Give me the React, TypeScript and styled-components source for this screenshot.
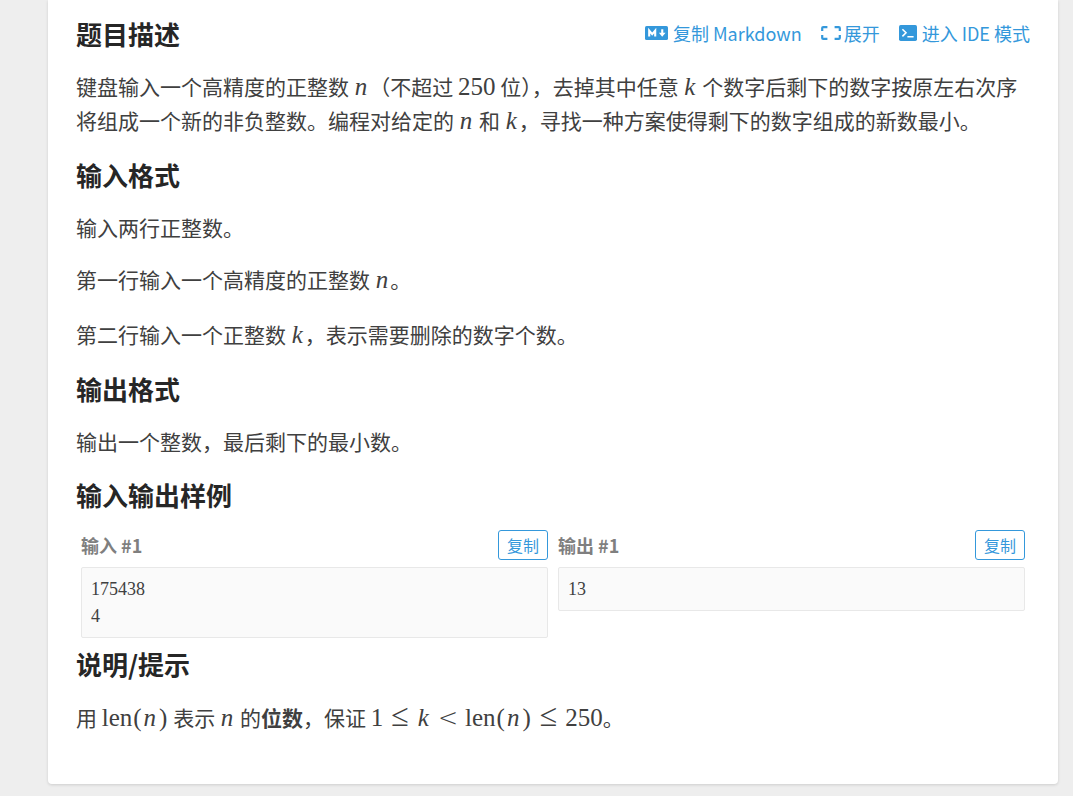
import React from "react";
import styled, { createGlobalStyle } from "styled-components";

const GlobalStyle = createGlobalStyle`
  * { box-sizing: border-box; }
  body {
    margin: 0;
    background: #eeeeee;
    color: #404040;
    font-family: "Noto Sans CJK SC", "Noto Sans", sans-serif;
    font-size: 21px;
    line-height: 34px;
  }
`;

const Page = styled.main`
  padding: 0 15px 13px 48px;
`;

const Card = styled.article`
  padding: 17px 28px 50px;
  background: #fff;
  border-radius: 0 0 4px 4px;
  box-shadow: 0 1px 3px rgba(26, 26, 26, 0.15);
`;

const TitleRow = styled.header`
  display: flex;
  justify-content: space-between;
  align-items: flex-start;
`;

const Heading = styled.h2`
  margin: 0 0 18px;
  font-size: 26px;
  line-height: 34px;
  font-weight: 700;
  color: #262626;
`;

const Actions = styled.nav`
  display: flex;
  gap: 19px;
`;

const Action = styled.a<{ $gap: number }>`
  display: flex;
  align-items: center;
  gap: ${(p) => p.$gap}px;
  color: #3498db;
  font-size: 18px;
  line-height: 32px;
  text-decoration: none;
  white-space: nowrap;
`;

const Paragraph = styled.p<{ $after?: number }>`
  margin: 0 0 ${(p) => p.$after ?? 18}px;
`;

const Num = styled.span`
  font-family: "Liberation Serif", serif;
  font-size: 25px;
  line-height: 1;
`;

const Var = styled(Num).attrs({ as: "i" })`
  padding: 0 2px 0 1px;
`;

const Paren = styled(Num)`
  padding: 0 1px;
`;

const Less = styled.span`
  padding: 0 7px;
  font-family: "DejaVu Sans Light", "DejaVu Sans", sans-serif;
  font-weight: 200;
  font-size: 24px;
  line-height: 1;
`;

const LessEqual = styled.span`
  padding: 0 8px;
  font-family: "Liberation Serif", serif;
  font-size: 32px;
  line-height: 1;
`;

const Samples = styled.section`
  display: grid;
  grid-template-columns: 1fr 1fr;
  align-items: start;
  gap: 10px;
  padding: 0 5px;
  margin-bottom: 9px;
`;

const SampleHead = styled.div`
  display: flex;
  justify-content: space-between;
  align-items: center;
  margin-bottom: 7px;
`;

const SampleTitle = styled.h3`
  margin: 0;
  font-size: 18px;
  line-height: 30px;
  color: #7f7f7f;
`;

const CopyButton = styled.button`
  height: 30px;
  padding: 0 8px;
  border: 1px solid #3498db;
  border-radius: 3px;
  background: #fff;
  color: #3498db;
  font-family: inherit;
  font-size: 16px;
  line-height: 28px;
`;

const Code = styled.pre`
  margin: 0;
  padding: 8px 9px 7px;
  border: 1px solid #e8e8e8;
  border-radius: 2px;
  background: #fafafa;
  font-family: "Liberation Serif", serif;
  font-size: 18px;
  line-height: 27px;
`;

const MarkdownIcon = () => (
  <svg width="23" height="14" viewBox="0 0 23 14" aria-hidden="true">
    <rect width="23" height="14" rx="1.6" fill="#3498db" />
    <path d="M4.2 10.4V4.6L7.2 8.2L10.2 4.6V10.4" fill="none" stroke="#fff" strokeWidth="2.1" />
    <path d="M16.2 3.3h2.1V6.8h2.3L17.2 10.8L13.9 6.8h2.3z" fill="#fff" />
  </svg>
);

const ExpandIcon = () => (
  <svg width="20" height="14" viewBox="0 0 20 14" aria-hidden="true">
    <path
      d="M6.4 1.1H2.2Q1.2 1.1 1.2 2.1V5M1.2 9V11.9Q1.2 12.9 2.2 12.9H6.4M13.6 1.1H17.8Q18.8 1.1 18.8 2.1V5M18.8 9V11.9Q18.8 12.9 17.8 12.9H13.6"
      fill="none"
      stroke="#3498db"
      strokeWidth="2.2"
    />
  </svg>
);

const TerminalIcon = () => (
  <svg width="18" height="16" viewBox="0 0 18 16" aria-hidden="true">
    <rect width="18" height="16" rx="1.7" fill="#3498db" />
    <path d="M3.4 4.2L7 7.8L3.4 11.4M8.4 11.8H14.6" fill="none" stroke="#fff" strokeWidth="1.6" />
  </svg>
);

const Sample = ({ title, text }: { title: string; text: string }) => (
  <div>
    <SampleHead>
      <SampleTitle>{title}</SampleTitle>
      <CopyButton type="button">复制</CopyButton>
    </SampleHead>
    <Code>{text}</Code>
  </div>
);

const Len = () => (
  <>
    <Num>len</Num>
    <Paren>(</Paren>
    <Var>n</Var>
    <Paren>)</Paren>
  </>
);

export default function App() {
  return (
    <>
      <GlobalStyle />
      <Page>
        <Card>
          <TitleRow>
            <Heading>题目描述</Heading>
            <Actions>
              <Action href="#markdown" $gap={5}><MarkdownIcon />复制 Markdown</Action>
              <Action href="#expand" $gap={3}><ExpandIcon />展开</Action>
              <Action href="#ide" $gap={5}><TerminalIcon />进入 IDE 模式</Action>
            </Actions>
          </TitleRow>
          <Paragraph $after={21}>
            键盘输入一个高精度的正整数 <Var>n</Var>（不超过 <Num>250</Num> 位），去掉其中任意 <Var>k</Var> 个数字后剩下的数字按原左右次序将组成一个新的非负整数。编程对给定的 <Var>n</Var> 和 <Var>k</Var>，寻找一种方案使得剩下的数字组成的新数最小。
          </Paragraph>

          <Heading>输入格式</Heading>
          <Paragraph>输入两行正整数。</Paragraph>
          <Paragraph $after={21}>第一行输入一个高精度的正整数 <Var>n</Var>。</Paragraph>
          <Paragraph $after={21}>第二行输入一个正整数 <Var>k</Var>，表示需要删除的数字个数。</Paragraph>

          <Heading>输出格式</Heading>
          <Paragraph $after={20}>输出一个整数，最后剩下的最小数。</Paragraph>

          <Heading>输入输出样例</Heading>
          <Samples>
            <Sample title="输入 #1" text={"175438\n4"} />
            <Sample title="输出 #1" text="13" />
          </Samples>

          <Heading>说明/提示</Heading>
          <Paragraph $after={0}>
            用 <Len /> 表示 <Var>n</Var> 的<b>位数</b>，保证 <Num>1</Num><LessEqual>≤</LessEqual><Var>k</Var><Less>&lt;</Less><Len /><LessEqual>≤</LessEqual><Num>250</Num>。
          </Paragraph>
        </Card>
      </Page>
    </>
  );
}
